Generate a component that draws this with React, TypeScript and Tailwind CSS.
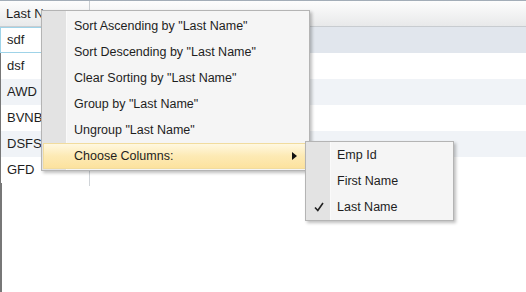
import React from "react";

const rows = ["sdf", "dsf", "AWD", "BVNB", "DSFS", "GFD"];

const menuItems = [
  'Sort Ascending by "Last Name"',
  'Sort Descending by "Last Name"',
  'Clear Sorting by "Last Name"',
  'Group by "Last Name"',
  'Ungroup "Last Name"',
];

const columns = [
  { name: "Emp Id", checked: false },
  { name: "First Name", checked: false },
  { name: "Last Name", checked: true },
];

export default function App() {
  return (
    <div className="relative w-[526px] h-[292px] overflow-hidden bg-white text-[13px] text-[#1e1e1e] font-['Liberation_Sans',Arial,sans-serif]">
      <div className="h-px bg-[#a3adb8]" />
      {/* header */}
      <div className="flex h-[26px] border-b border-[#c8ccd0] bg-gradient-to-b from-[#fdfdfd] to-[#e8e9ea]">
        <div className="w-[90px] border-r border-[#c9cdd1] pl-[6px] flex items-center">Last Name</div>
        <div className="flex-1" />
      </div>

      {/* rows */}
      <div className="flex flex-col">
        {rows.map((r, i) => (
          <div
            key={r}
            className={`flex h-[26px] ${
              i === 0 ? "bg-[#e1e6ed]" : i % 2 === 0 ? "bg-[#f0f3f7] border-l border-[#777]" : "bg-white border-l border-[#777]"
            }`}
          >
            <div
              className={`flex items-center ${
                i === 0
                  ? "w-[90px] pl-[6px] border border-[#9fd3e8] bg-white"
                  : "w-[89px] pl-[6px] border-r border-[#d0d4d8]"
              }`}
            >
              {r}
            </div>
            <div className="flex-1" />
          </div>
        ))}
        <div className="h-[110px] border-l-2 border-[#777] flex">
          <div className="w-[88px] h-[3px] border-r border-[#d0d4d8]" />
        </div>
      </div>

      {/* context menu */}
      <div className="absolute left-[41px] top-[10px] w-[269px] h-[161px] border border-[#b4b4b4] bg-[#f5f5f5] shadow-[2px_2px_3px_rgba(0,0,0,0.25)] text-[12.5px]">
        <div className="absolute left-0 top-0 bottom-0 w-[25px] bg-[#e3e3e3] border-r border-[#fafafa]" />
        <div className="relative flex flex-col pt-[2px] px-px">
          {menuItems.map((m) => (
            <div key={m} className="h-[26px] flex items-center pl-[31px]">
              {m}
            </div>
          ))}
          <div className="h-[26px] flex items-center pl-[30px] pr-[10px] border border-[#f1dc9e] bg-gradient-to-b from-[#fff8e0] via-[#fdeab4] to-[#fce29e]">
            <span className="flex-1">Choose Columns:</span>
            <svg width="5" height="8" viewBox="0 0 5 8">
              <path d="M0 0 L5 4 L0 8 Z" fill="#111" />
            </svg>
          </div>
        </div>
      </div>

      {/* submenu */}
      <div className="absolute left-[305px] top-[141px] w-[149px] h-[80px] border border-[#b4b4b4] bg-[#f5f5f5] shadow-[2px_2px_3px_rgba(0,0,0,0.25)] text-[12.5px]">
        <div className="absolute left-0 top-0 bottom-0 w-[25px] bg-[#e3e3e3] border-r border-[#fafafa]" />
        <div className="relative flex flex-col">
          {columns.map((c) => (
            <div key={c.name} className="h-[26px] flex items-center">
              <div className="w-[25px] flex justify-center items-center">
                {c.checked && (
                  <svg width="10" height="10" viewBox="0 0 10 10">
                    <path d="M1 5.5 L3.8 8.5 L9 1" stroke="#222" strokeWidth="1.6" fill="none" />
                  </svg>
                )}
              </div>
              <span className="pl-[6px]">{c.name}</span>
            </div>
          ))}
        </div>
      </div>
    </div>
  );
}
